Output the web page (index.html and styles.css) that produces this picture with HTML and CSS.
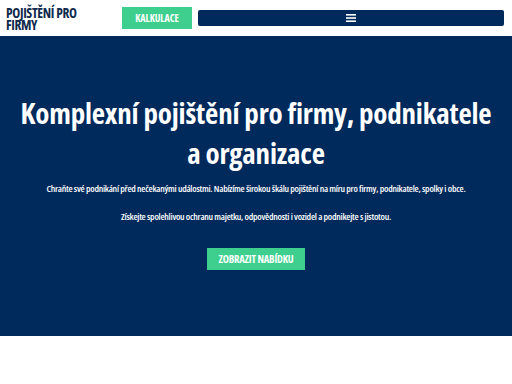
FILE: index.html
```html
<!DOCTYPE html>
<html lang="cs">
<head>
<meta charset="utf-8">
<title>Pojištění pro firmy</title>
<link rel="stylesheet" href="styles.css">
</head>
<body>
<header class="top">
  <div class="logo">POJIŠTĚNÍ PRO<br>FIRMY</div>
  <a class="btn btn-top" href="#">KALKULACE</a>
  <button class="menu" type="button" aria-label="Menu">
    <svg width="10" height="8" viewBox="0 0 10 8"><rect x="0" y="0" width="10" height="1.6" fill="#fff"/><rect x="0" y="3.2" width="10" height="1.6" fill="#fff"/><rect x="0" y="6.4" width="10" height="1.6" fill="#fff"/></svg>
  </button>
</header>
<section class="hero">
  <h1 class="title">Komplexní pojištění pro firmy, podnikatele a organizace</h1>
  <p class="lead">Chraňte své podnikání před nečekanými událostmi. Nabízíme širokou škálu pojištění na míru pro firmy, podnikatele, spolky i obce.</p>
  <p class="lead lead2">Získejte spolehlivou ochranu majetku, odpovědnosti i vozidel a podnikejte s jistotou.</p>
  <a class="btn btn-hero" href="#">ZOBRAZIT NABÍDKU</a>
</section>
</body>
</html>
```
FILE: styles.css
```css
* { box-sizing: border-box; }
html, body { margin: 0; padding: 0; background: #fff; }
body {
  font-family: "Open Sans", "Roboto", sans-serif;
  font-stretch: 75%;
}

.top {
  height: 36px;
  display: flex;
  align-items: center;
  padding: 0 8px 0 6px;
}
.logo {
  width: 116px;
  font-weight: 700;
  font-size: 13.5px;
  line-height: 12px;
  letter-spacing: -0.35px;
  padding-top: 1px;
  color: #0f2a4d;
}
.btn {
  display: inline-flex;
  align-items: center;
  justify-content: center;
  background: #3ecf8e;
  color: #fff;
  font-weight: 700;
  text-decoration: none;
}
.btn-top {
  width: 70px;
  height: 22px;
  font-size: 10px;
}
.menu {
  flex: 1;
  margin-left: 6px;
  height: 16px;
  background: #012a5c;
  border: none;
  border-radius: 2px;
  display: flex;
  align-items: center;
  justify-content: center;
  padding: 0;
}
.menu svg { display: block; }

.hero {
  background: #012a5c;
  height: 300px;
  display: flex;
  flex-direction: column;
  align-items: center;
  padding-top: 57px;
  text-align: center;
  color: #fff;
}
.title {
  margin: 0 0 9px;
  font-size: 29px;
  line-height: 40px;
  letter-spacing: -0.2px;
  font-weight: 700;
  padding: 0 16px;
}
.lead {
  margin: 0;
  font-size: 9.5px;
  line-height: 14px;
  letter-spacing: -0.25px;
  font-weight: 600;
  color: #fff;
}
.lead2 { margin-top: 14px; }
.btn-hero {
  margin-top: 24px;
  width: 98px;
  height: 22px;
  font-size: 10.5px;
  letter-spacing: -0.2px;
}
```
